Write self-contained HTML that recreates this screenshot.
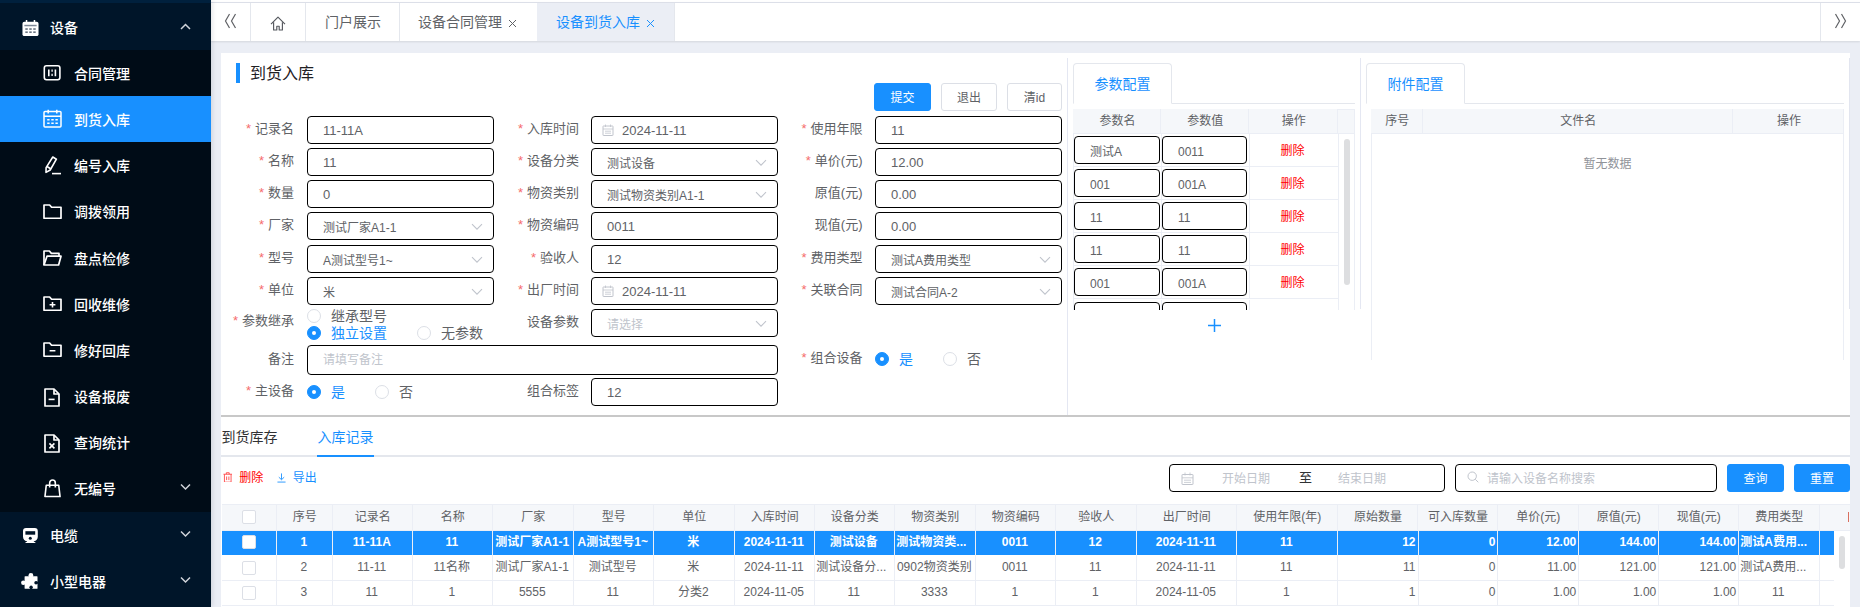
<!DOCTYPE html><html lang="zh-CN"><head><meta charset="utf-8"><title>设备到货入库</title><style>
*{box-sizing:border-box;margin:0;padding:0}
html,body{width:1860px;height:607px;overflow:hidden;background:#ebeef5;font-family:"Liberation Sans","Noto Sans CJK SC",sans-serif;font-size:13px;color:#606266}
.abs{position:absolute}
#side{position:absolute;left:0;top:0;width:211px;height:607px;background:#001529;box-shadow:1px 0 5px rgba(0,21,41,.13);z-index:5}
#side .strip{position:absolute;left:0;top:0;width:211px;height:3px;background:#00203d}
#side .sub{position:absolute;left:0;top:50px;width:211px;height:461.5px;background:#000c17}
#side .act{position:absolute;left:0;top:96px;width:211px;height:46px;background:#1890ff}
.mi{position:absolute;left:0;width:211px;height:46px;color:#fff;font-size:14px;font-weight:500;line-height:46px;white-space:nowrap}
.mi svg{position:absolute}
.mi span{position:absolute;top:1px}
#tabs{position:absolute;left:211px;top:2px;width:1649px;height:39px;background:#fff;border-top:1px solid #dcdfe8;box-shadow:0 1px 2px rgba(0,0,0,.10)}
#tabs .sep{position:absolute;top:0;width:1px;height:38px;background:#e4e7ed}
#tabs .t{position:absolute;top:0;height:38px;line-height:39px;font-size:14px;color:#606266;white-space:nowrap}
#panel{position:absolute;left:221px;top:53px;width:1629px;height:554px;background:#fff}
.lbl{position:absolute;height:28px;line-height:28px;font-size:13px;color:#606266;text-align:right;white-space:nowrap}
.lbl i{color:#f56c6c;font-style:normal;margin-right:4px}
.inp{position:absolute;height:28px;border:1px solid #000;border-radius:4px;background:#fff;line-height:28px;font-size:13px;color:#606266;padding-left:15px;white-space:nowrap;overflow:hidden}
.inp.ph{color:#c0c4cc}
.inp svg{position:absolute}
.btn{position:absolute;height:28px;border-radius:3px;font-size:12px;line-height:29px;text-align:center;white-space:nowrap}
.btn.p{background:#1890ff;border:1px solid #1890ff;color:#fff}
.btn.d{background:#fff;border:1px solid #dcdfe6;color:#606266}
.radio{position:absolute;width:14px;height:14px;border-radius:50%;border:1px solid #dcdfe6;background:#fff}
.radio.on{border-color:#1890ff;background:#1890ff}
.radio.on:after{content:"";position:absolute;left:4px;top:4px;width:4px;height:4px;border-radius:50%;background:#fff}
.rl{position:absolute;font-size:14px;line-height:16px;color:#606266;white-space:nowrap}
.rl.on{color:#1890ff}
.vl{position:absolute;width:1px;background:#e4e7f2}
.hl{position:absolute;height:1px;background:#e4e7ed}
.th{position:absolute;background:#f5f7fa;color:#606266;font-size:12px;text-align:center;white-space:nowrap;overflow:hidden}
.td{position:absolute;font-size:12px;color:#606266;text-align:center;white-space:nowrap;overflow:hidden;text-overflow:ellipsis}
.cb{position:absolute;width:14px;height:14px;border:1px solid #dcdfe6;border-radius:2px;background:#fff}
</style></head><body>
<div id="side"><div class="strip"></div><div class="sub"></div><div class="act"></div>
<div class="mi" style="top:4px"><svg width="17" height="16.600" viewBox="0 0 18 18" preserveAspectRatio="none" style="left:21.800px;top:15.500px"><rect x="0.5" y="2" width="17" height="15.5" rx="2" fill="#fff"/><rect x="4" y="0" width="1.6" height="3" fill="#fff"/><rect x="12.4" y="0" width="1.6" height="3" fill="#fff"/><rect x="2.5" y="5.2" width="13" height="1.6" fill="#7d8896"/><g fill="#5b6674"><rect x="3.5" y="9" width="2.6" height="1.6"/><rect x="7.7" y="9" width="2.6" height="1.6"/><rect x="11.9" y="9" width="2.6" height="1.6"/><rect x="3.5" y="12.4" width="2.6" height="1.6"/><rect x="7.7" y="12.4" width="2.6" height="1.6"/><rect x="11.9" y="12.4" width="2.6" height="1.6"/></g></svg><span style="left:50px">设备</span><svg width="11" height="8" viewBox="0 0 11 8" style="left:179.500px;top:19px" fill="none" stroke="#d0d4da" stroke-width="1.500"><path d="M1 6l4.500-4.500L10 6"/></svg></div>
<div class="mi" style="top:50.0px"><svg width="18" height="16" viewBox="0 0 18 16" style="left:43px;top:15px" fill="none" stroke="#fff" stroke-width="1.6"><rect x="1.3" y="0.8" width="15.6" height="14" rx="2.2"/><path d="M5.8 4.4v6.8M12.4 4.4v6.8" /><path d="M9.100 4.600v2.200M9.100 8.800v2.200" stroke-width="1.300"/></svg><span style="left:74px">合同管理</span></div>
<div class="mi" style="top:96.2px"><svg width="19" height="19" viewBox="0 0 19 19" style="left:43px;top:13px" fill="none" stroke="#fff" stroke-width="1.5"><rect x="1" y="2.6" width="17" height="15.4" rx="1"/><path d="M1 7.200h17M5.200 .8v3.600M13.800 .8v3.600"/><path d="M4.2 10.8h2.4M8.3 10.8h2.4M12.4 10.8h2.4M4.2 14.3h2.4M8.3 14.3h2.4M12.4 14.3h2.4" stroke-width="1.6"/></svg><span style="left:74px">到货入库</span></div>
<div class="mi" style="top:142.3px"><svg width="18" height="19" viewBox="0 0 18 19" style="left:43.500px;top:14px" fill="none" stroke="#fff" stroke-width="1.600" stroke-linejoin="round"><path d="M8.8 1l3.6 2.2L6.2 14 2 16.4l.1-4.8z"/><path d="M3 10.5l3.6 2.2"/><path d="M8 17.6h9" /></svg><span style="left:74px">编号入库</span></div>
<div class="mi" style="top:188.4px"><svg width="19" height="15.200" viewBox="0 0 19 16" preserveAspectRatio="none" style="left:43px;top:15.500px" fill="none" stroke="#fff" stroke-width="1.700" stroke-linejoin="round"><path d="M1 1h5.6l2 2.4H18V15H1z"/></svg><span style="left:74px">调拨领用</span></div>
<div class="mi" style="top:234.6px"><svg width="19" height="16" viewBox="0 0 19 16" style="left:43px;top:15.500px" fill="none" stroke="#fff" stroke-width="1.700" stroke-linejoin="round"><path d="M1 15V1h5.4l2 2.4H16v2.8"/><path d="M1 15L4 6.2h14L15.6 15z"/></svg><span style="left:74px">盘点检修</span></div>
<div class="mi" style="top:280.8px"><svg width="19" height="15.200" viewBox="0 0 19 16" preserveAspectRatio="none" style="left:43px;top:15.500px" fill="none" stroke="#fff" stroke-width="1.700" stroke-linejoin="round"><path d="M1 1h5.6l2 2.4H18V15H1z"/><path d="M6.6 9.2h5.8M9.5 6.4v5.6" stroke-width="1.6"/></svg><span style="left:74px">回收维修</span></div>
<div class="mi" style="top:326.9px"><svg width="19" height="15.200" viewBox="0 0 19 16" preserveAspectRatio="none" style="left:43px;top:15.500px" fill="none" stroke="#fff" stroke-width="1.700" stroke-linejoin="round"><path d="M1 1h5.6l2 2.4H18V15H1z"/><path d="M6.6 9.2h5.8" stroke-width="1.6"/></svg><span style="left:74px">修好回库</span></div>
<div class="mi" style="top:373.1px"><svg width="16" height="19" viewBox="0 0 16 19" style="left:44.300px;top:14.500px" fill="none" stroke="#fff" stroke-width="1.700" stroke-linejoin="round"><path d="M1 1h9l5 5v12H1z"/><path d="M10 1v5h5"/><path d="M4.6 11.4h6" stroke-width="1.6"/></svg><span style="left:74px">设备报废</span></div>
<div class="mi" style="top:419.2px"><svg width="16" height="19" viewBox="0 0 16 19" style="left:44.300px;top:14.500px" fill="none" stroke="#fff" stroke-width="1.700" stroke-linejoin="round"><path d="M1 1h9l5 5v12H1z"/><path d="M10 1v5h5"/><path d="M5.400 9.400l5 5M10.400 9.400l-5 5" stroke-width="1.600"/></svg><span style="left:74px">查询统计</span></div>
<div class="mi" style="top:465.3px"><svg width="17" height="18.500" viewBox="0 0 18 19" preserveAspectRatio="none" style="left:43.800px;top:14px" fill="none" stroke="#fff" stroke-width="1.700" stroke-linejoin="round"><path d="M2.400 6.400h13.200L17 18H1z"/><path d="M6 8.800V4a3 3 0 016 0v4.800"/></svg><span style="left:74px">无编号</span><svg width="11" height="8" viewBox="0 0 11 8" style="left:179.500px;top:18px" fill="none" stroke="#d0d4da" stroke-width="1.500"><path d="M1 1.500L5.500 6 10 1.500"/></svg></div>
<div class="mi" style="top:511.5px"><svg width="15" height="15.400" viewBox="0 0 15 15.400" style="left:22.600px;top:16.500px"><path fill="#fff" d="M3 0h8.800a3 3 0 013 3v5.800a4.400 4.400 0 01-4.400 4.400H4.400A4.400 4.400 0 010 8.800V3a3 3 0 013-3z"/><path fill="#fff" d="M4.200 13h6.400l2.200 2H2z"/><rect x="2.400" y="3.200" width="9.800" height="3.500" fill="#001529"/><circle cx="7.300" cy="10.200" r="1.500" fill="#001529"/><rect x="1.500" y="13.300" width="2.400" height=".5" fill="#001529"/><rect x="10.900" y="13.300" width="2.400" height=".5" fill="#001529"/></svg><span style="left:50px">电缆</span><svg width="11" height="8" viewBox="0 0 11 8" style="left:179.500px;top:18px" fill="none" stroke="#d0d4da" stroke-width="1.500"><path d="M1 1.500L5.500 6 10 1.500"/></svg></div>
<div class="mi" style="top:557.6px"><svg width="17" height="16" viewBox="0 0 17 16" style="left:21px;top:15.400px"><rect x="3.600" y="3.200" width="12.900" height="12.600" rx=".6" fill="#fff"/><circle cx="9.900" cy="2.500" r="2.400" fill="#fff"/><circle cx="2.300" cy="9.700" r="2.200" fill="#fff"/><circle cx="15" cy="9.700" r="1.700" fill="#001529"/><rect x="15" y="8.700" width="2" height="2" fill="#001529"/><circle cx="10.100" cy="14.300" r="1.700" fill="#001529"/><rect x="9.100" y="14.300" width="2" height="2" fill="#001529"/></svg><span style="left:50px">小型电器</span><svg width="11" height="8" viewBox="0 0 11 8" style="left:179.500px;top:18px" fill="none" stroke="#d0d4da" stroke-width="1.500"><path d="M1 1.500L5.500 6 10 1.500"/></svg></div>
</div>
<div class="abs" style="left:211px;top:0;width:1649px;height:2px;background:#fff"></div>
<div id="tabs">
<div class="sep" style="left:39px"></div>
<div class="sep" style="left:94px"></div>
<div class="sep" style="left:188px"></div>
<div class="sep" style="left:463px"></div>
<div class="sep" style="left:1609px"></div>
<div class="abs" style="left:326px;top:0;width:137px;height:38px;background:#ebeef5"></div>
<svg class="abs" style="left:13px;top:10px" width="14" height="16" viewBox="0 0 14 16" fill="none" stroke="#606266" stroke-width="1.200"><path d="M5.500 1L1.500 8l4 7M11.500 1L7.500 8l4 7"/></svg>
<svg class="abs" style="left:1622px;top:10px" width="14" height="16" viewBox="0 0 14 16" fill="none" stroke="#606266" stroke-width="1.200"><path d="M2.500 1l4 7-4 7M8.500 1l4 7-4 7"/></svg>
<svg class="abs" style="left:59px;top:13px" width="16" height="15" viewBox="0 0 16 15" fill="none" stroke="#55585e" stroke-width="1.150" stroke-linejoin="round"><path d="M1 8.200l7-7L15 8.200"/><path d="M3.600 6.200V14h3.200v-3.800h2.400V14h3.200V6.200"/></svg>
<div class="t" style="left:114px">门户展示</div>
<div class="t" style="left:207px">设备合同管理</div>
<svg class="abs" style="left:296.800px;top:16px" width="9" height="9" viewBox="0 0 9 9" stroke="#606266" stroke-width="1"><path d="M1 1l7 7M8 1l-7 7"/></svg>
<div class="t" style="left:345px;color:#1890ff">设备到货入库</div>
<svg class="abs" style="left:434.700px;top:16px" width="9" height="9" viewBox="0 0 9 9" stroke="#1890ff" stroke-width="1"><path d="M1 1l7 7M8 1l-7 7"/></svg>
</div>
<div id="panel">
<div class="abs" style="left:15px;top:10px;width:4px;height:20px;background:#1890ff"></div>
<div class="abs" style="left:29px;top:11px;font-size:16px;line-height:20px;color:#1f2023;white-space:nowrap">到货入库</div>
<div class="lbl" style="left:-37px;top:62px;width:110px"><i>*</i>记录名</div>
<div class="inp" style="left:86px;top:63px;width:187px;">11-11A</div>
<div class="lbl" style="left:-37px;top:94px;width:110px"><i>*</i>名称</div>
<div class="inp" style="left:86px;top:95px;width:187px;">11</div>
<div class="lbl" style="left:-37px;top:126px;width:110px"><i>*</i>数量</div>
<div class="inp" style="left:86px;top:127px;width:187px;">0</div>
<div class="lbl" style="left:-37px;top:158px;width:110px"><i>*</i>厂家</div>
<div class="inp" style="left:86px;top:159px;width:187px;font-size:12px;line-height:30px;"><svg style="right:10.500px;top:9.600px" width="12" height="8" viewBox="0 0 12 8" fill="none" stroke="#c0c4cc" stroke-width="1.100"><path d="M1 1.200l5 5 5-5"/></svg>测试厂家A1-1</div>
<div class="lbl" style="left:-37px;top:191px;width:110px"><i>*</i>型号</div>
<div class="inp" style="left:86px;top:192px;width:187px;font-size:12px;line-height:30px;"><svg style="right:10.500px;top:9.600px" width="12" height="8" viewBox="0 0 12 8" fill="none" stroke="#c0c4cc" stroke-width="1.100"><path d="M1 1.200l5 5 5-5"/></svg>A测试型号1~</div>
<div class="lbl" style="left:-37px;top:223px;width:110px"><i>*</i>单位</div>
<div class="inp" style="left:86px;top:224px;width:187px;font-size:12px;line-height:30px;"><svg style="right:10.500px;top:9.600px" width="12" height="8" viewBox="0 0 12 8" fill="none" stroke="#c0c4cc" stroke-width="1.100"><path d="M1 1.200l5 5 5-5"/></svg>米</div>
<div class="lbl" style="left:248px;top:62px;width:110px"><i>*</i>入库时间</div>
<div class="inp" style="left:370px;top:63px;width:187px;padding-left:30px;"><svg style="left:10px;top:7px" width="12" height="12" viewBox="0 0 12 12" fill="none" stroke="#c0c4cc" stroke-width="1"><rect x="1" y="2" width="10" height="9.500" rx=".4"/><path d="M1 5h10M3.500 .5v2.500M8.500 .5v2.500M3 7.200h6M3 9.200h6" stroke-width=".8"/></svg>2024-11-11</div>
<div class="lbl" style="left:248px;top:94px;width:110px"><i>*</i>设备分类</div>
<div class="inp" style="left:370px;top:95px;width:187px;font-size:12px;line-height:30px;"><svg style="right:10.500px;top:9.600px" width="12" height="8" viewBox="0 0 12 8" fill="none" stroke="#c0c4cc" stroke-width="1.100"><path d="M1 1.200l5 5 5-5"/></svg>测试设备</div>
<div class="lbl" style="left:248px;top:126px;width:110px"><i>*</i>物资类别</div>
<div class="inp" style="left:370px;top:127px;width:187px;font-size:12px;line-height:30px;"><svg style="right:10.500px;top:9.600px" width="12" height="8" viewBox="0 0 12 8" fill="none" stroke="#c0c4cc" stroke-width="1.100"><path d="M1 1.200l5 5 5-5"/></svg>测试物资类别A1-1</div>
<div class="lbl" style="left:248px;top:158px;width:110px"><i>*</i>物资编码</div>
<div class="inp" style="left:370px;top:159px;width:187px;">0011</div>
<div class="lbl" style="left:248px;top:191px;width:110px"><i>*</i>验收人</div>
<div class="inp" style="left:370px;top:192px;width:187px;">12</div>
<div class="lbl" style="left:248px;top:223px;width:110px"><i>*</i>出厂时间</div>
<div class="inp" style="left:370px;top:224px;width:187px;padding-left:30px;"><svg style="left:10px;top:7px" width="12" height="12" viewBox="0 0 12 12" fill="none" stroke="#c0c4cc" stroke-width="1"><rect x="1" y="2" width="10" height="9.500" rx=".4"/><path d="M1 5h10M3.500 .5v2.500M8.500 .5v2.500M3 7.200h6M3 9.200h6" stroke-width=".8"/></svg>2024-11-11</div>
<div class="lbl" style="left:248px;top:255px;width:110px">设备参数</div>
<div class="inp ph" style="left:370px;top:256px;width:187px;font-size:12px;line-height:30px;"><svg style="right:10.500px;top:9.600px" width="12" height="8" viewBox="0 0 12 8" fill="none" stroke="#c0c4cc" stroke-width="1.100"><path d="M1 1.200l5 5 5-5"/></svg>请选择</div>
<div class="lbl" style="left:248px;top:324px;width:110px">组合标签</div>
<div class="inp" style="left:370px;top:325px;width:187px;">12</div>
<div class="lbl" style="left:531.5px;top:62px;width:110px"><i>*</i>使用年限</div>
<div class="inp" style="left:654px;top:63px;width:187px;">11</div>
<div class="lbl" style="left:531.5px;top:94px;width:110px"><i>*</i>单价(元)</div>
<div class="inp" style="left:654px;top:95px;width:187px;">12.00</div>
<div class="lbl" style="left:531.5px;top:126px;width:110px">原值(元)</div>
<div class="inp" style="left:654px;top:127px;width:187px;">0.00</div>
<div class="lbl" style="left:531.5px;top:158px;width:110px">现值(元)</div>
<div class="inp" style="left:654px;top:159px;width:187px;">0.00</div>
<div class="lbl" style="left:531.5px;top:191px;width:110px"><i>*</i>费用类型</div>
<div class="inp" style="left:654px;top:192px;width:187px;font-size:12px;line-height:30px;"><svg style="right:10.500px;top:9.600px" width="12" height="8" viewBox="0 0 12 8" fill="none" stroke="#c0c4cc" stroke-width="1.100"><path d="M1 1.200l5 5 5-5"/></svg>测试A费用类型</div>
<div class="lbl" style="left:531.5px;top:223px;width:110px"><i>*</i>关联合同</div>
<div class="inp" style="left:654px;top:224px;width:187px;font-size:12px;line-height:30px;"><svg style="right:10.500px;top:9.600px" width="12" height="8" viewBox="0 0 12 8" fill="none" stroke="#c0c4cc" stroke-width="1.100"><path d="M1 1.200l5 5 5-5"/></svg>测试合同A-2</div>
<div class="lbl" style="left:-37px;top:292px;width:110px">备注</div>
<div class="inp ph" style="left:86px;top:292px;width:471px;font-size:12px;height:29.5px;line-height:29px;">请填写备注</div>
<div class="lbl" style="left:-37px;top:254px;width:110px"><i>*</i>参数继承</div>
<div class="radio" style="left:86px;top:256px"></div>
<div class="rl" style="left:110px;top:255px">继承型号</div>
<div class="radio on" style="left:86px;top:273px"></div>
<div class="rl on" style="left:110px;top:272px">独立设置</div>
<div class="radio" style="left:196px;top:273px"></div>
<div class="rl" style="left:220px;top:272px">无参数</div>
<div class="lbl" style="left:-37px;top:324px;width:110px"><i>*</i>主设备</div>
<div class="radio on" style="left:86px;top:332px"></div>
<div class="rl on" style="left:110px;top:331px">是</div>
<div class="radio" style="left:154px;top:332px"></div>
<div class="rl" style="left:178px;top:331px">否</div>
<div class="lbl" style="left:531.5px;top:291px;width:110px"><i>*</i>组合设备</div>
<div class="radio on" style="left:654px;top:299px"></div>
<div class="rl on" style="left:678px;top:298px">是</div>
<div class="radio" style="left:722px;top:299px"></div>
<div class="rl" style="left:746px;top:298px">否</div>
<div class="btn p" style="left:653px;top:30px;width:57px">提交</div>
<div class="btn d" style="left:720px;top:30px;width:56px">退出</div>
<div class="btn d" style="left:786px;top:30px;width:55px">清id</div>
<div class="vl" style="left:846px;top:5px;height:357px"></div>
<div class="vl" style="left:1139px;top:5px;height:251px"></div>
<div class="abs" style="left:852px;top:50px;width:282px;height:1px;background:#e4e7ed"></div>
<div class="abs" style="left:852px;top:10px;width:99px;height:41px;border:1px solid #e4e7ed;border-bottom:1px solid #fff;border-radius:4px 4px 0 0;background:#fff;color:#1890ff;font-size:14px;line-height:40px;text-align:center">参数配置</div>
<div class="abs" style="left:1145px;top:50px;width:478px;height:1px;background:#e4e7ed"></div>
<div class="abs" style="left:1145px;top:10px;width:99px;height:41px;border:1px solid #e4e7ed;border-bottom:1px solid #fff;border-radius:4px 4px 0 0;background:#fff;color:#1890ff;font-size:14px;line-height:40px;text-align:center">附件配置</div>
<div class="abs" style="left:852px;top:56px;width:282px;height:25px;background:#f5f7fa;border:1px solid #ebeef5"></div>
<div class="th" style="left:852px;top:56px;width:88px;height:25px;line-height:25px;padding-left:2px;border-right:1px solid #ebeef5;border-bottom:1px solid #ebeef5">参数名</div>
<div class="th" style="left:940px;top:56px;width:87.5px;height:25px;line-height:25px;padding-left:2px;border-right:1px solid #ebeef5;border-bottom:1px solid #ebeef5">参数值</div>
<div class="th" style="left:1027.5px;top:56px;width:89.5px;height:25px;line-height:25px;padding-left:2px;border-right:1px solid #ebeef5;border-bottom:1px solid #ebeef5">操作</div>
<div class="abs" style="left:852px;top:81px;width:265px;height:176px;overflow:hidden;border-left:1px solid #ebeef5">
<div class="abs" style="left:0;top:0.0px;width:265px;height:33px;border-bottom:1px solid #ebeef5"></div>
<div class="abs" style="left:87px;top:0.0px;width:1px;height:33px;background:#ebeef5"></div>
<div class="abs" style="left:175px;top:0.0px;width:1px;height:33px;background:#ebeef5"></div>
<div class="inp" style="left:0px;top:2.0px;width:86px;height:28px;font-size:12px;line-height:30px">测试A</div>
<div class="inp" style="left:88px;top:2.0px;width:85px;height:28px;font-size:12px;line-height:30px">0011</div>
<div class="abs" style="left:174px;top:0.0px;width:89px;height:33px;line-height:34px;text-align:center;color:#ff0000;font-size:12px">删除</div>
<div class="abs" style="left:0;top:33.1px;width:265px;height:33px;border-bottom:1px solid #ebeef5"></div>
<div class="abs" style="left:87px;top:33.1px;width:1px;height:33px;background:#ebeef5"></div>
<div class="abs" style="left:175px;top:33.1px;width:1px;height:33px;background:#ebeef5"></div>
<div class="inp" style="left:0px;top:35.1px;width:86px;height:28px;font-size:12px;line-height:30px">001</div>
<div class="inp" style="left:88px;top:35.1px;width:85px;height:28px;font-size:12px;line-height:30px">001A</div>
<div class="abs" style="left:174px;top:33.1px;width:89px;height:33px;line-height:34px;text-align:center;color:#ff0000;font-size:12px">删除</div>
<div class="abs" style="left:0;top:66.2px;width:265px;height:33px;border-bottom:1px solid #ebeef5"></div>
<div class="abs" style="left:87px;top:66.2px;width:1px;height:33px;background:#ebeef5"></div>
<div class="abs" style="left:175px;top:66.2px;width:1px;height:33px;background:#ebeef5"></div>
<div class="inp" style="left:0px;top:68.2px;width:86px;height:28px;font-size:12px;line-height:30px">11</div>
<div class="inp" style="left:88px;top:68.2px;width:85px;height:28px;font-size:12px;line-height:30px">11</div>
<div class="abs" style="left:174px;top:66.2px;width:89px;height:33px;line-height:34px;text-align:center;color:#ff0000;font-size:12px">删除</div>
<div class="abs" style="left:0;top:99.3px;width:265px;height:33px;border-bottom:1px solid #ebeef5"></div>
<div class="abs" style="left:87px;top:99.3px;width:1px;height:33px;background:#ebeef5"></div>
<div class="abs" style="left:175px;top:99.3px;width:1px;height:33px;background:#ebeef5"></div>
<div class="inp" style="left:0px;top:101.3px;width:86px;height:28px;font-size:12px;line-height:30px">11</div>
<div class="inp" style="left:88px;top:101.3px;width:85px;height:28px;font-size:12px;line-height:30px">11</div>
<div class="abs" style="left:174px;top:99.3px;width:89px;height:33px;line-height:34px;text-align:center;color:#ff0000;font-size:12px">删除</div>
<div class="abs" style="left:0;top:132.4px;width:265px;height:33px;border-bottom:1px solid #ebeef5"></div>
<div class="abs" style="left:87px;top:132.4px;width:1px;height:33px;background:#ebeef5"></div>
<div class="abs" style="left:175px;top:132.4px;width:1px;height:33px;background:#ebeef5"></div>
<div class="inp" style="left:0px;top:134.4px;width:86px;height:28px;font-size:12px;line-height:30px">001</div>
<div class="inp" style="left:88px;top:134.4px;width:85px;height:28px;font-size:12px;line-height:30px">001A</div>
<div class="abs" style="left:174px;top:132.4px;width:89px;height:33px;line-height:34px;text-align:center;color:#ff0000;font-size:12px">删除</div>
<div class="abs" style="left:0;top:165.5px;width:265px;height:33px;border-bottom:1px solid #ebeef5"></div>
<div class="abs" style="left:87px;top:165.5px;width:1px;height:33px;background:#ebeef5"></div>
<div class="abs" style="left:175px;top:165.5px;width:1px;height:33px;background:#ebeef5"></div>
<div class="inp" style="left:0px;top:167.5px;width:86px;height:28px;font-size:12px;line-height:30px"></div>
<div class="inp" style="left:88px;top:167.5px;width:85px;height:28px;font-size:12px;line-height:30px"></div>
</div>
<div class="vl" style="left:1117px;top:81px;height:176px;background:#ebeef5"></div>
<div class="vl" style="left:1133px;top:56px;height:201px;background:#ebeef5"></div>
<div class="abs" style="left:1123px;top:86px;width:6px;height:145.5px;border-radius:3px;background:#dddee0"></div>
<svg class="abs" style="left:986.5px;top:265.5px" width="13" height="13" viewBox="0 0 13 13" stroke="#1890ff" stroke-width="1.500"><path d="M6.500 0v13M0 6.500h13"/></svg>
<div class="abs" style="left:1150px;top:56px;width:473px;height:250.5px;border:1px solid #ebeef5;border-bottom:none"></div>
<div class="th" style="left:1150px;top:56px;width:51.5px;height:25px;line-height:25px;padding-left:2px;border-right:1px solid #ebeef5;border-bottom:1px solid #ebeef5">序号</div>
<div class="th" style="left:1201.5px;top:56px;width:310.5px;height:25px;line-height:25px;padding-left:2px;border-right:1px solid #ebeef5;border-bottom:1px solid #ebeef5">文件名</div>
<div class="th" style="left:1512px;top:56px;width:111px;height:25px;line-height:25px;padding-left:2px;border-right:1px solid #ebeef5;border-bottom:1px solid #ebeef5">操作</div>
<div class="abs" style="left:1150px;top:101px;width:473px;text-align:center;font-size:12px;line-height:20px;color:#909399">暂无数据</div>
<div class="abs" style="left:1628px;top:5px;width:1px;height:251px;background:#e2e5ef"></div>
<div class="abs" style="left:0;top:362px;width:1629px;height:2px;background:#c8c8c8"></div>
<div class="abs" style="left:0;top:401.7px;width:1629px;height:2px;background:#e4e7ed"></div>
<div class="abs" style="left:96px;top:401.7px;width:57px;height:2px;background:#1890ff"></div>
<div class="abs" style="left:0.5px;top:374px;font-size:14px;line-height:20px;color:#303133;white-space:nowrap">到货库存</div>
<div class="abs" style="left:96.5px;top:374px;font-size:14px;line-height:20px;color:#1890ff;white-space:nowrap">入库记录</div>
<svg class="abs" style="left:2px;top:418.5px" width="9.500" height="10.800" viewBox="0 0 10 12" preserveAspectRatio="none" fill="none" stroke="#ff3b3b" stroke-width=".9"><path d="M.5 2.500h9M3.500 2.500V.8h3v1.700M1.500 2.500v8.800h7V2.500M3.800 5v4M6.200 5v4"/></svg>
<div class="abs" style="left:18.3px;top:416.5px;font-size:12px;line-height:16px;color:#ff0000;white-space:nowrap">删除</div>
<svg class="abs" style="left:56px;top:420px" width="9" height="9.500" viewBox="0 0 10 11" preserveAspectRatio="none" fill="none" stroke="#1890ff" stroke-width="1"><path d="M5 .5v7M2 4.800l3 3 3-3M.5 10.500h9"/></svg>
<div class="abs" style="left:71.7px;top:416.5px;font-size:12px;line-height:16px;color:#1890ff;white-space:nowrap">导出</div>
<div class="inp" style="left:948px;top:411px;width:276px;padding:0">
<svg style="left:10.500px;top:6.500px" width="13" height="13.500" viewBox="0 0 13 13.500" fill="none" stroke="#c0c4cc" stroke-width="1"><rect x="1" y="2.500" width="11" height="10" rx=".4"/><path d="M1 5.800h11M4 .5v3M9 .5v3M3 8.200h7M3 10.400h7" stroke-width=".8"/></svg>
<span class="abs" style="left:52px;top:0;color:#c0c4cc;font-size:12px">开始日期</span><span class="abs" style="left:129px;top:-1px;color:#303133;font-size:13px">至</span><span class="abs" style="left:168px;top:0;color:#c0c4cc;font-size:12px">结束日期</span></div>
<div class="inp ph" style="left:1234px;top:411px;width:262px;padding-left:31px;font-size:12px">
<svg style="left:10.500px;top:6px" width="12" height="12" viewBox="0 0 12 12" fill="none" stroke="#c0c4cc" stroke-width="1"><circle cx="5.200" cy="5.200" r="4.200"/><path d="M8.300 8.300l3 3"/></svg>请输入设备名称搜索</div>
<div class="btn p" style="left:1506px;top:411px;width:57px;font-size:12px">查询</div>
<div class="btn p" style="left:1573px;top:411px;width:56px;font-size:12px">重置</div>
<div class="abs" style="left:0.7px;top:451.3px;width:1628.3px;height:26.400000000000034px;background:#f5f7fa;border-top:1px solid #ebeef5;border-bottom:1px solid #ebeef5"></div>
<div class="th" style="left:0.7px;top:452.3px;width:55.6px;height:24.4px;line-height:24.4px;background:none;border-right:1px solid #ebeef5"></div>
<div class="th" style="left:56.3px;top:452.3px;width:56.0px;height:24.4px;line-height:24.4px;background:none;border-right:1px solid #ebeef5">序号</div>
<div class="th" style="left:112.3px;top:452.3px;width:80.0px;height:24.4px;line-height:24.4px;background:none;border-right:1px solid #ebeef5">记录名</div>
<div class="th" style="left:192.3px;top:452.3px;width:80.0px;height:24.4px;line-height:24.4px;background:none;border-right:1px solid #ebeef5">名称</div>
<div class="th" style="left:272.3px;top:452.3px;width:81.0px;height:24.4px;line-height:24.4px;background:none;border-right:1px solid #ebeef5">厂家</div>
<div class="th" style="left:353.3px;top:452.3px;width:80.0px;height:24.4px;line-height:24.4px;background:none;border-right:1px solid #ebeef5">型号</div>
<div class="th" style="left:433.3px;top:452.3px;width:81.0px;height:24.4px;line-height:24.4px;background:none;border-right:1px solid #ebeef5">单位</div>
<div class="th" style="left:514.3px;top:452.3px;width:80.0px;height:24.4px;line-height:24.4px;background:none;border-right:1px solid #ebeef5">入库时间</div>
<div class="th" style="left:594.3px;top:452.3px;width:80.0px;height:24.4px;line-height:24.4px;background:none;border-right:1px solid #ebeef5">设备分类</div>
<div class="th" style="left:674.3px;top:452.3px;width:81.0px;height:24.4px;line-height:24.4px;background:none;border-right:1px solid #ebeef5">物资类别</div>
<div class="th" style="left:755.3px;top:452.3px;width:80.0px;height:24.4px;line-height:24.4px;background:none;border-right:1px solid #ebeef5">物资编码</div>
<div class="th" style="left:835.3px;top:452.3px;width:81.0px;height:24.4px;line-height:24.4px;background:none;border-right:1px solid #ebeef5">验收人</div>
<div class="th" style="left:916.3px;top:452.3px;width:100.0px;height:24.4px;line-height:24.4px;background:none;border-right:1px solid #ebeef5">出厂时间</div>
<div class="th" style="left:1016.3px;top:452.3px;width:101.0px;height:24.4px;line-height:24.4px;background:none;border-right:1px solid #ebeef5">使用年限(年)</div>
<div class="th" style="left:1117.3px;top:452.3px;width:80.2px;height:24.4px;line-height:24.4px;background:none;border-right:1px solid #ebeef5">原始数量</div>
<div class="th" style="left:1197.5px;top:452.3px;width:79.9px;height:24.4px;line-height:24.4px;background:none;border-right:1px solid #ebeef5">可入库数量</div>
<div class="th" style="left:1277.4px;top:452.3px;width:80.9px;height:24.4px;line-height:24.4px;background:none;border-right:1px solid #ebeef5">单价(元)</div>
<div class="th" style="left:1358.3px;top:452.3px;width:80.0px;height:24.4px;line-height:24.4px;background:none;border-right:1px solid #ebeef5">原值(元)</div>
<div class="th" style="left:1438.3px;top:452.3px;width:80.0px;height:24.4px;line-height:24.4px;background:none;border-right:1px solid #ebeef5">现值(元)</div>
<div class="th" style="left:1518.3px;top:452.3px;width:81.0px;height:24.4px;line-height:24.4px;background:none;border-right:1px solid #ebeef5">费用类型</div>
<div class="th" style="left:1599.3px;top:452.3px;width:30.7px;height:24.4px;line-height:24.4px;background:none;border-right:1px solid #ebeef5"></div>
<div class="abs" style="left:1626.7px;top:459.2px;width:1px;height:9.500px;background:#d9705f"></div>
<div class="cb" style="left:21px;top:457px"></div>
<div class="abs" style="left:0.7px;top:478px;width:1612.3px;height:24.4px;background:#1890ff;border-bottom:1px solid #1890ff"></div>
<div class="cb" style="left:21px;top:482.3px"></div>
<div class="abs" style="left:55.3px;top:478px;width:1px;height:24.4px;background:#ebeef5"></div>
<div class="abs" style="left:111.3px;top:478px;width:1px;height:24.4px;background:#ebeef5"></div>
<div class="td" style="left:55.3px;top:477px;width:55.0px;height:24px;line-height:24px;color:#fff;font-weight:bold;">1</div>
<div class="abs" style="left:191.3px;top:478px;width:1px;height:24.4px;background:#ebeef5"></div>
<div class="td" style="left:111.3px;top:477px;width:79.0px;height:24px;line-height:24px;color:#fff;font-weight:bold;">11-11A</div>
<div class="abs" style="left:271.3px;top:478px;width:1px;height:24.4px;background:#ebeef5"></div>
<div class="td" style="left:191.3px;top:477px;width:79.0px;height:24px;line-height:24px;color:#fff;font-weight:bold;">11</div>
<div class="abs" style="left:352.3px;top:478px;width:1px;height:24.4px;background:#ebeef5"></div>
<div class="td" style="left:271.3px;top:477px;width:80.0px;height:24px;line-height:24px;color:#fff;font-weight:bold;">测试厂家A1-1</div>
<div class="abs" style="left:432.3px;top:478px;width:1px;height:24.4px;background:#ebeef5"></div>
<div class="td" style="left:352.3px;top:477px;width:79.0px;height:24px;line-height:24px;color:#fff;font-weight:bold;">A测试型号1~</div>
<div class="abs" style="left:513.3px;top:478px;width:1px;height:24.4px;background:#ebeef5"></div>
<div class="td" style="left:432.3px;top:477px;width:80.0px;height:24px;line-height:24px;color:#fff;font-weight:bold;">米</div>
<div class="abs" style="left:593.3px;top:478px;width:1px;height:24.4px;background:#ebeef5"></div>
<div class="td" style="left:513.3px;top:477px;width:79.0px;height:24px;line-height:24px;color:#fff;font-weight:bold;">2024-11-11</div>
<div class="abs" style="left:673.3px;top:478px;width:1px;height:24.4px;background:#ebeef5"></div>
<div class="td" style="left:593.3px;top:477px;width:79.0px;height:24px;line-height:24px;color:#fff;font-weight:bold;">测试设备</div>
<div class="abs" style="left:754.3px;top:478px;width:1px;height:24.4px;background:#ebeef5"></div>
<div class="td" style="left:673.3px;top:477px;width:80.0px;height:24px;line-height:24px;text-align:left;padding-left:2px;text-overflow:clip;color:#fff;font-weight:bold;">测试物资类...</div>
<div class="abs" style="left:834.3px;top:478px;width:1px;height:24.4px;background:#ebeef5"></div>
<div class="td" style="left:754.3px;top:477px;width:79.0px;height:24px;line-height:24px;color:#fff;font-weight:bold;">0011</div>
<div class="abs" style="left:915.3px;top:478px;width:1px;height:24.4px;background:#ebeef5"></div>
<div class="td" style="left:834.3px;top:477px;width:80.0px;height:24px;line-height:24px;color:#fff;font-weight:bold;">12</div>
<div class="abs" style="left:1015.3px;top:478px;width:1px;height:24.4px;background:#ebeef5"></div>
<div class="td" style="left:915.3px;top:477px;width:99.0px;height:24px;line-height:24px;color:#fff;font-weight:bold;">2024-11-11</div>
<div class="abs" style="left:1116.3px;top:478px;width:1px;height:24.4px;background:#ebeef5"></div>
<div class="td" style="left:1015.3px;top:477px;width:100.0px;height:24px;line-height:24px;color:#fff;font-weight:bold;">11</div>
<div class="abs" style="left:1196.5px;top:478px;width:1px;height:24.4px;background:#ebeef5"></div>
<div class="td" style="left:1116.3px;top:477px;width:79.2px;height:24px;line-height:24px;text-align:right;padding-right:1px;color:#fff;font-weight:bold;">12</div>
<div class="abs" style="left:1276.4px;top:478px;width:1px;height:24.4px;background:#ebeef5"></div>
<div class="td" style="left:1196.5px;top:477px;width:78.9px;height:24px;line-height:24px;text-align:right;padding-right:1px;color:#fff;font-weight:bold;">0</div>
<div class="abs" style="left:1357.3px;top:478px;width:1px;height:24.4px;background:#ebeef5"></div>
<div class="td" style="left:1276.4px;top:477px;width:79.9px;height:24px;line-height:24px;text-align:right;padding-right:1px;color:#fff;font-weight:bold;">12.00</div>
<div class="abs" style="left:1437.3px;top:478px;width:1px;height:24.4px;background:#ebeef5"></div>
<div class="td" style="left:1357.3px;top:477px;width:79.0px;height:24px;line-height:24px;text-align:right;padding-right:1px;color:#fff;font-weight:bold;">144.00</div>
<div class="abs" style="left:1517.3px;top:478px;width:1px;height:24.4px;background:#ebeef5"></div>
<div class="td" style="left:1437.3px;top:477px;width:79.0px;height:24px;line-height:24px;text-align:right;padding-right:1px;color:#fff;font-weight:bold;">144.00</div>
<div class="abs" style="left:1598.3px;top:478px;width:1px;height:24.4px;background:#ebeef5"></div>
<div class="td" style="left:1517.3px;top:477px;width:80.0px;height:24px;line-height:24px;text-align:left;padding-left:2px;text-overflow:clip;color:#fff;font-weight:bold;">测试A费用...</div>
<div class="abs" style="left:0.7px;top:502.4px;width:1612.3px;height:25.6px;background:#fff;border-bottom:1px solid #ebeef5"></div>
<div class="cb" style="left:21px;top:507.7px"></div>
<div class="abs" style="left:55.3px;top:502.4px;width:1px;height:25.6px;background:#ebeef5"></div>
<div class="abs" style="left:111.3px;top:502.4px;width:1px;height:25.6px;background:#ebeef5"></div>
<div class="td" style="left:55.3px;top:502px;width:55.0px;height:24px;line-height:24px;">2</div>
<div class="abs" style="left:191.3px;top:502.4px;width:1px;height:25.6px;background:#ebeef5"></div>
<div class="td" style="left:111.3px;top:502px;width:79.0px;height:24px;line-height:24px;">11-11</div>
<div class="abs" style="left:271.3px;top:502.4px;width:1px;height:25.6px;background:#ebeef5"></div>
<div class="td" style="left:191.3px;top:502px;width:79.0px;height:24px;line-height:24px;">11名称</div>
<div class="abs" style="left:352.3px;top:502.4px;width:1px;height:25.6px;background:#ebeef5"></div>
<div class="td" style="left:271.3px;top:502px;width:80.0px;height:24px;line-height:24px;">测试厂家A1-1</div>
<div class="abs" style="left:432.3px;top:502.4px;width:1px;height:25.6px;background:#ebeef5"></div>
<div class="td" style="left:352.3px;top:502px;width:79.0px;height:24px;line-height:24px;">测试型号</div>
<div class="abs" style="left:513.3px;top:502.4px;width:1px;height:25.6px;background:#ebeef5"></div>
<div class="td" style="left:432.3px;top:502px;width:80.0px;height:24px;line-height:24px;">米</div>
<div class="abs" style="left:593.3px;top:502.4px;width:1px;height:25.6px;background:#ebeef5"></div>
<div class="td" style="left:513.3px;top:502px;width:79.0px;height:24px;line-height:24px;">2024-11-11</div>
<div class="abs" style="left:673.3px;top:502.4px;width:1px;height:25.6px;background:#ebeef5"></div>
<div class="td" style="left:593.3px;top:502px;width:79.0px;height:24px;line-height:24px;text-align:left;padding-left:2px;text-overflow:clip;">测试设备分...</div>
<div class="abs" style="left:754.3px;top:502.4px;width:1px;height:25.6px;background:#ebeef5"></div>
<div class="td" style="left:673.3px;top:502px;width:80.0px;height:24px;line-height:24px;">0902物资类别</div>
<div class="abs" style="left:834.3px;top:502.4px;width:1px;height:25.6px;background:#ebeef5"></div>
<div class="td" style="left:754.3px;top:502px;width:79.0px;height:24px;line-height:24px;">0011</div>
<div class="abs" style="left:915.3px;top:502.4px;width:1px;height:25.6px;background:#ebeef5"></div>
<div class="td" style="left:834.3px;top:502px;width:80.0px;height:24px;line-height:24px;">11</div>
<div class="abs" style="left:1015.3px;top:502.4px;width:1px;height:25.6px;background:#ebeef5"></div>
<div class="td" style="left:915.3px;top:502px;width:99.0px;height:24px;line-height:24px;">2024-11-11</div>
<div class="abs" style="left:1116.3px;top:502.4px;width:1px;height:25.6px;background:#ebeef5"></div>
<div class="td" style="left:1015.3px;top:502px;width:100.0px;height:24px;line-height:24px;">11</div>
<div class="abs" style="left:1196.5px;top:502.4px;width:1px;height:25.6px;background:#ebeef5"></div>
<div class="td" style="left:1116.3px;top:502px;width:79.2px;height:24px;line-height:24px;text-align:right;padding-right:1px;">11</div>
<div class="abs" style="left:1276.4px;top:502.4px;width:1px;height:25.6px;background:#ebeef5"></div>
<div class="td" style="left:1196.5px;top:502px;width:78.9px;height:24px;line-height:24px;text-align:right;padding-right:1px;">0</div>
<div class="abs" style="left:1357.3px;top:502.4px;width:1px;height:25.6px;background:#ebeef5"></div>
<div class="td" style="left:1276.4px;top:502px;width:79.9px;height:24px;line-height:24px;text-align:right;padding-right:1px;">11.00</div>
<div class="abs" style="left:1437.3px;top:502.4px;width:1px;height:25.6px;background:#ebeef5"></div>
<div class="td" style="left:1357.3px;top:502px;width:79.0px;height:24px;line-height:24px;text-align:right;padding-right:1px;">121.00</div>
<div class="abs" style="left:1517.3px;top:502.4px;width:1px;height:25.6px;background:#ebeef5"></div>
<div class="td" style="left:1437.3px;top:502px;width:79.0px;height:24px;line-height:24px;text-align:right;padding-right:1px;">121.00</div>
<div class="abs" style="left:1598.3px;top:502.4px;width:1px;height:25.6px;background:#ebeef5"></div>
<div class="td" style="left:1517.3px;top:502px;width:80.0px;height:24px;line-height:24px;text-align:left;padding-left:2px;text-overflow:clip;">测试A费用...</div>
<div class="abs" style="left:0.7px;top:528px;width:1612.3px;height:25px;background:#fff;border-bottom:1px solid #ebeef5"></div>
<div class="cb" style="left:21px;top:533.3px"></div>
<div class="abs" style="left:55.3px;top:528px;width:1px;height:25px;background:#ebeef5"></div>
<div class="abs" style="left:111.3px;top:528px;width:1px;height:25px;background:#ebeef5"></div>
<div class="td" style="left:55.3px;top:527px;width:55.0px;height:24px;line-height:24px;">3</div>
<div class="abs" style="left:191.3px;top:528px;width:1px;height:25px;background:#ebeef5"></div>
<div class="td" style="left:111.3px;top:527px;width:79.0px;height:24px;line-height:24px;">11</div>
<div class="abs" style="left:271.3px;top:528px;width:1px;height:25px;background:#ebeef5"></div>
<div class="td" style="left:191.3px;top:527px;width:79.0px;height:24px;line-height:24px;">1</div>
<div class="abs" style="left:352.3px;top:528px;width:1px;height:25px;background:#ebeef5"></div>
<div class="td" style="left:271.3px;top:527px;width:80.0px;height:24px;line-height:24px;">5555</div>
<div class="abs" style="left:432.3px;top:528px;width:1px;height:25px;background:#ebeef5"></div>
<div class="td" style="left:352.3px;top:527px;width:79.0px;height:24px;line-height:24px;">11</div>
<div class="abs" style="left:513.3px;top:528px;width:1px;height:25px;background:#ebeef5"></div>
<div class="td" style="left:432.3px;top:527px;width:80.0px;height:24px;line-height:24px;">分类2</div>
<div class="abs" style="left:593.3px;top:528px;width:1px;height:25px;background:#ebeef5"></div>
<div class="td" style="left:513.3px;top:527px;width:79.0px;height:24px;line-height:24px;">2024-11-05</div>
<div class="abs" style="left:673.3px;top:528px;width:1px;height:25px;background:#ebeef5"></div>
<div class="td" style="left:593.3px;top:527px;width:79.0px;height:24px;line-height:24px;">11</div>
<div class="abs" style="left:754.3px;top:528px;width:1px;height:25px;background:#ebeef5"></div>
<div class="td" style="left:673.3px;top:527px;width:80.0px;height:24px;line-height:24px;">3333</div>
<div class="abs" style="left:834.3px;top:528px;width:1px;height:25px;background:#ebeef5"></div>
<div class="td" style="left:754.3px;top:527px;width:79.0px;height:24px;line-height:24px;">1</div>
<div class="abs" style="left:915.3px;top:528px;width:1px;height:25px;background:#ebeef5"></div>
<div class="td" style="left:834.3px;top:527px;width:80.0px;height:24px;line-height:24px;">1</div>
<div class="abs" style="left:1015.3px;top:528px;width:1px;height:25px;background:#ebeef5"></div>
<div class="td" style="left:915.3px;top:527px;width:99.0px;height:24px;line-height:24px;">2024-11-05</div>
<div class="abs" style="left:1116.3px;top:528px;width:1px;height:25px;background:#ebeef5"></div>
<div class="td" style="left:1015.3px;top:527px;width:100.0px;height:24px;line-height:24px;">1</div>
<div class="abs" style="left:1196.5px;top:528px;width:1px;height:25px;background:#ebeef5"></div>
<div class="td" style="left:1116.3px;top:527px;width:79.2px;height:24px;line-height:24px;text-align:right;padding-right:1px;">1</div>
<div class="abs" style="left:1276.4px;top:528px;width:1px;height:25px;background:#ebeef5"></div>
<div class="td" style="left:1196.5px;top:527px;width:78.9px;height:24px;line-height:24px;text-align:right;padding-right:1px;">0</div>
<div class="abs" style="left:1357.3px;top:528px;width:1px;height:25px;background:#ebeef5"></div>
<div class="td" style="left:1276.4px;top:527px;width:79.9px;height:24px;line-height:24px;text-align:right;padding-right:1px;">1.00</div>
<div class="abs" style="left:1437.3px;top:528px;width:1px;height:25px;background:#ebeef5"></div>
<div class="td" style="left:1357.3px;top:527px;width:79.0px;height:24px;line-height:24px;text-align:right;padding-right:1px;">1.00</div>
<div class="abs" style="left:1517.3px;top:528px;width:1px;height:25px;background:#ebeef5"></div>
<div class="td" style="left:1437.3px;top:527px;width:79.0px;height:24px;line-height:24px;text-align:right;padding-right:1px;">1.00</div>
<div class="abs" style="left:1598.3px;top:528px;width:1px;height:25px;background:#ebeef5"></div>
<div class="td" style="left:1517.3px;top:527px;width:80.0px;height:24px;line-height:24px;">11</div>
<div class="abs" style="left:1618px;top:483px;width:6px;height:33.299999999999955px;border-radius:3px;background:#dddee0"></div>
</div>
</body></html>
